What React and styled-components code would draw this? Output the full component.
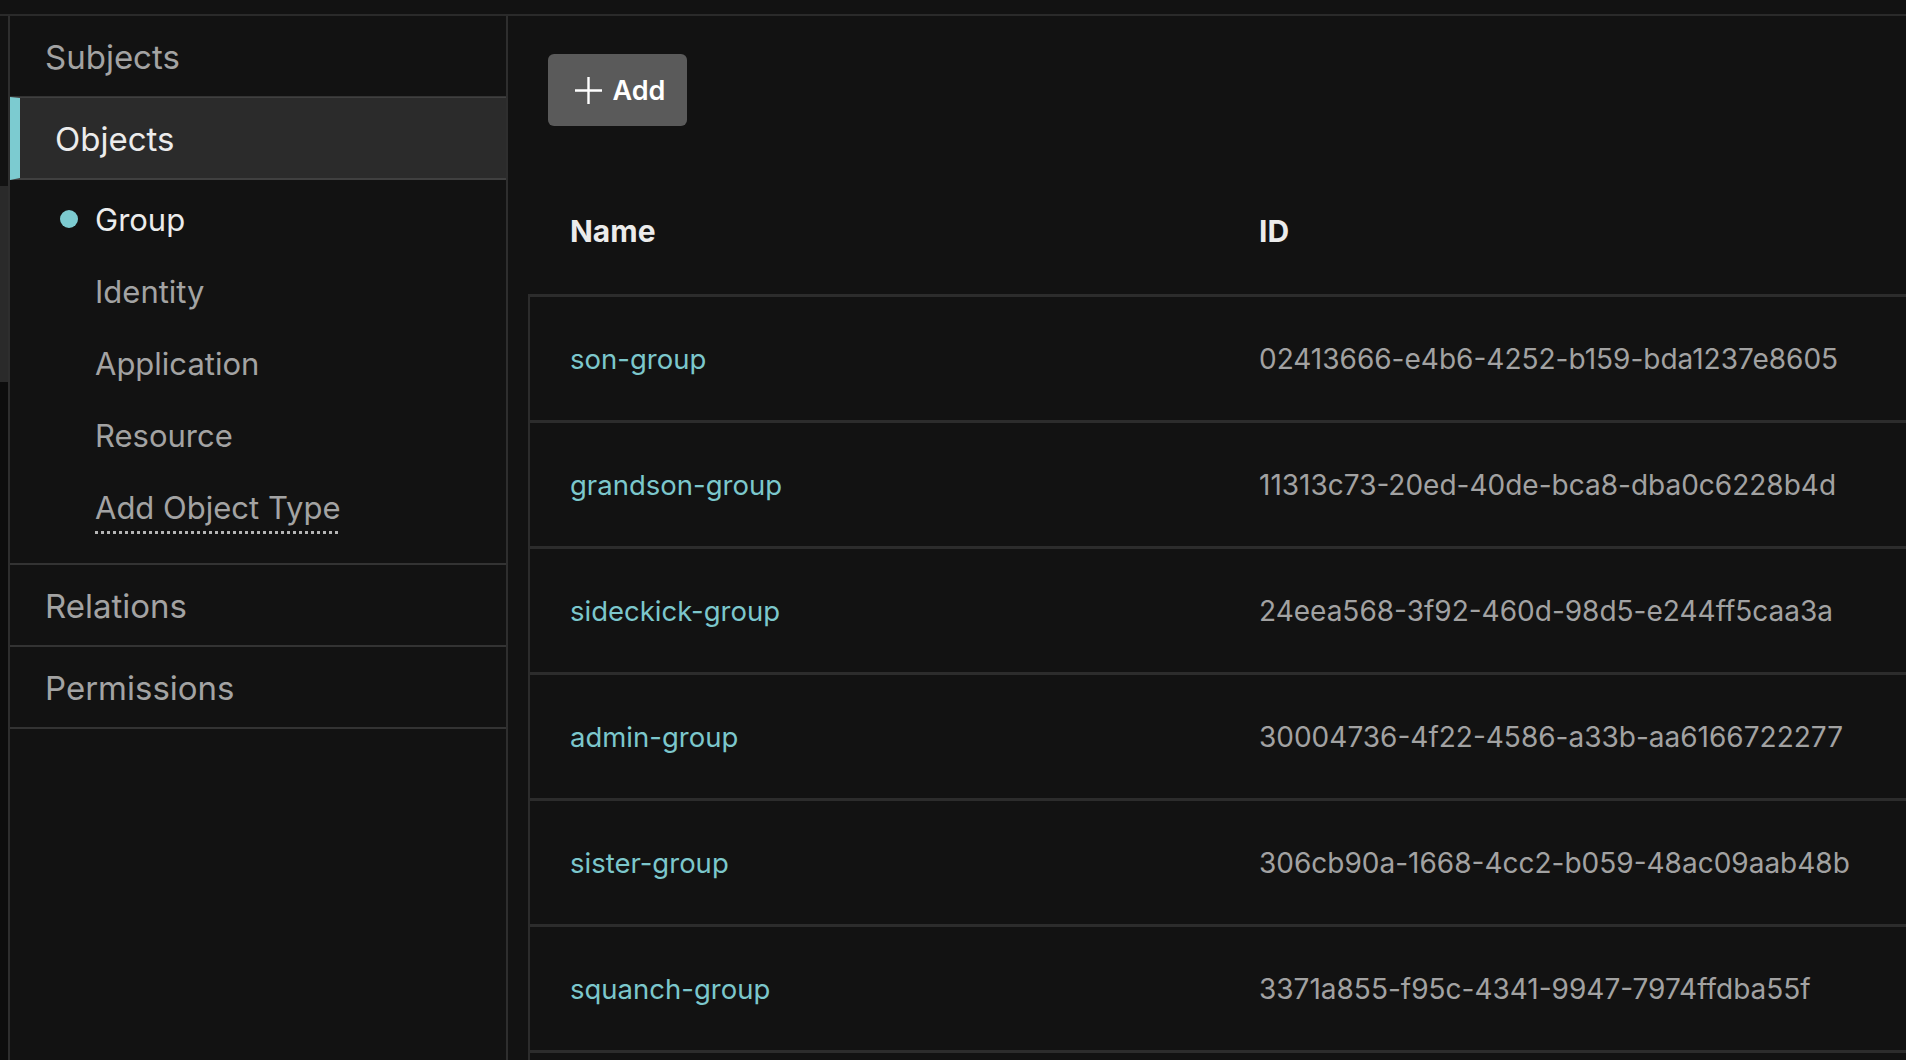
import React from "react";
import styled, { createGlobalStyle } from "styled-components";

const GlobalStyle = createGlobalStyle`
  html, body {
    margin: 0;
    padding: 0;
    background: #121212;
    font-family: Inter, "Noto Sans", "Liberation Sans", sans-serif;
    -webkit-font-smoothing: antialiased;
  }
  * {
    box-sizing: border-box;
  }
`;

const Page = styled.div`
  height: 100vh;
  display: flex;
  flex-direction: column;
  overflow: hidden;
  background: #121212;
`;

const TopBar = styled.div`
  height: 16px;
  flex-shrink: 0;
  border-bottom: 2px solid #2a2a2a;
`;

const Body = styled.div`
  flex: 1;
  display: flex;
  min-height: 0;
`;

const Gutter = styled.div`
  width: 8px;
  flex-shrink: 0;
  display: flex;
  flex-direction: column;
  background: #0d0d0d;
`;

const GutterTop = styled.div`
  height: 170px;
  background: #121212;
`;

const GutterThumb = styled.div`
  height: 196px;
  background: #2a2a2a;
`;

const Sidebar = styled.nav`
  width: 500px;
  flex-shrink: 0;
  display: flex;
  flex-direction: column;
  border-left: 2px solid #2e2e2e;
  border-right: 2px solid #2e2e2e;
`;

const Section = styled.div`
  height: ${({ $active }) => ($active ? 83 : 82)}px;
  display: flex;
  align-items: center;
  padding-left: 35px;
  padding-top: 2px;
  font-size: 33px;
  color: ${({ $active }) => ($active ? "#ececec" : "#a3a3a3")};
  background: ${({ $active }) => ($active ? "#2b2b2b" : "transparent")};
  border-left: ${({ $active }) => ($active ? "10px solid #7ccbd0" : "none")};
  border-bottom: 2px solid ${({ $active }) => ($active ? "#404040" : "#333333")};
  border-top: ${({ $active }) => ($active ? "1px solid #404040" : "none")};
  margin-top: ${({ $active }) => ($active ? "-1px" : "0")};
`;

const SubList = styled.div`
  display: flex;
  flex-direction: column;
  padding: 3px 0 20px 0;
  border-bottom: 2px solid #333333;
`;

const SubItem = styled.div`
  height: 72px;
  display: flex;
  align-items: center;
  padding-left: 50px;
  gap: 17px;
  font-size: 31px;
  color: ${({ $active }) => ($active ? "#ececec" : "#a3a3a3")};
`;

const Dot = styled.span`
  width: 18px;
  height: 18px;
  border-radius: 50%;
  flex-shrink: 0;
  background: ${({ $visible }) => ($visible ? "#7ccbd0" : "transparent")};
`;

const DottedLink = styled.span`
  text-decoration: underline dotted #b5b5b5;
  text-decoration-thickness: 3px;
  text-underline-offset: 12px;
`;

const Main = styled.main`
  flex: 1;
  display: flex;
  flex-direction: column;
  padding: 38px 0 0 20px;
  min-width: 0;
`;

const Toolbar = styled.div`
  display: flex;
  padding-left: 20px;
  margin-bottom: 42px;
`;

const AddButton = styled.button`
  height: 72px;
  width: 139px;
  display: flex;
  align-items: center;
  justify-content: center;
  gap: 10px;
  border: none;
  border-radius: 6px;
  background: #5a5a5a;
  color: #ffffff;
  font-family: Inter, "Noto Sans", sans-serif;
  font-size: 27px;
  font-weight: 600;
  padding: 0 0 0 4px;
  cursor: pointer;
`;

const Table = styled.div`
  flex: 1;
  display: flex;
  flex-direction: column;
`;

const HeaderRow = styled.div`
  display: grid;
  grid-template-columns: 689px 1fr;
  height: 126px;
  align-items: center;
`;

const HeaderCell = styled.div`
  padding-left: 42px;
  font-size: 30px;
  font-weight: 700;
  color: #ebebeb;
`;

const Rows = styled.div`
  flex: 1;
  border-left: 2px solid #2c2c2c;
  display: flex;
  flex-direction: column;
`;

const Row = styled.div`
  display: grid;
  grid-template-columns: 687px 1fr;
  height: 126px;
  flex-shrink: 0;
  align-items: center;
  border-top: 3px solid #2c2c2c;
`;

const RowTail = styled.div`
  flex: 1;
  border-top: 3px solid #2c2c2c;
`;

const NameCell = styled.div`
  padding-left: 40px;
  font-size: 27.5px;
  color: #7cc7cc;
`;

const IdCell = styled.div`
  padding-left: 42px;
  font-size: 28px;
  color: #a2a2a2;
  white-space: nowrap;
`;

const PlusIcon = () => (
  <svg width="29" height="29" viewBox="0 0 29 29" fill="none">
    <path d="M14.5 1v27M1 14.5h27" stroke="#ffffff" strokeWidth="2.4" />
  </svg>
);

const objectTypes = ["Group", "Identity", "Application", "Resource"];

const rows = [
  { name: "son-group", id: "02413666-e4b6-4252-b159-bda1237e8605" },
  { name: "grandson-group", id: "11313c73-20ed-40de-bca8-dba0c6228b4d" },
  { name: "sideckick-group", id: "24eea568-3f92-460d-98d5-e244ff5caa3a" },
  { name: "admin-group", id: "30004736-4f22-4586-a33b-aa6166722277" },
  { name: "sister-group", id: "306cb90a-1668-4cc2-b059-48ac09aab48b" },
  { name: "squanch-group", id: "3371a855-f95c-4341-9947-7974ffdba55f" },
];

const App = () => {
  return (
    <Page>
      <GlobalStyle />
      <TopBar />
      <Body>
        <Gutter>
          <GutterTop />
          <GutterThumb />
        </Gutter>
        <Sidebar>
          <Section>Subjects</Section>
          <Section $active>Objects</Section>
          <SubList>
            {objectTypes.map((type, i) => (
              <SubItem key={type} $active={i === 0}>
                <Dot $visible={i === 0} />
                {type}
              </SubItem>
            ))}
            <SubItem>
              <Dot />
              <DottedLink>Add Object Type</DottedLink>
            </SubItem>
          </SubList>
          <Section>Relations</Section>
          <Section>Permissions</Section>
        </Sidebar>
        <Main>
          <Toolbar>
            <AddButton>
              <PlusIcon />
              Add
            </AddButton>
          </Toolbar>
          <Table>
            <HeaderRow>
              <HeaderCell>Name</HeaderCell>
              <HeaderCell>ID</HeaderCell>
            </HeaderRow>
            <Rows>
              {rows.map((row) => (
                <Row key={row.id}>
                  <NameCell>{row.name}</NameCell>
                  <IdCell>{row.id}</IdCell>
                </Row>
              ))}
              <RowTail />
            </Rows>
          </Table>
        </Main>
      </Body>
    </Page>
  );
};

export default App;
